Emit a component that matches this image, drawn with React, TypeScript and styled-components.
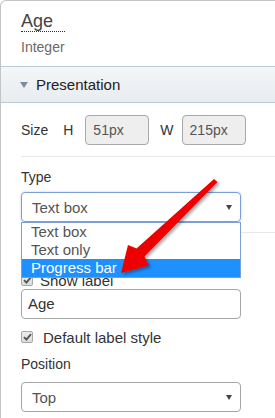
import React from "react";
import styled, { createGlobalStyle } from "styled-components";

const Global = createGlobalStyle`
  html, body { margin: 0; padding: 0; background: #fff; }
  body { font-family: "Liberation Sans", Arial, sans-serif; color: #333; overflow: hidden; }
  * { box-sizing: border-box; }
`;

const Panel = styled.div`
  position: relative;
  width: 275px;
  height: 418px;
  border-top: 1px solid #c4c4c4;
  border-left: 1px solid #c4c4c4;
  border-top-left-radius: 6px;
  overflow: hidden;
`;

const Header = styled.div`
  height: 65px;
  padding: 10px 20px 0;
`;

const Title = styled.div`
  display: inline-block;
  font-size: 18px;
  line-height: 20px;
  color: #444;
  padding-right: 12px;
  border-bottom: 1px dotted #333;
`;

const Subtitle = styled.div`
  margin-top: 7px;
  font-size: 14px;
  line-height: 16px;
  color: #6a6a6a;
`;

const SectionHeader = styled.div`
  height: 37px;
  display: flex;
  align-items: center;
  padding-left: 19px;
  gap: 8px;
  border-top: 1px solid #b6ccd8;
  border-bottom: 1px solid #b6ccd8;
  background: linear-gradient(#f4f6f8, #e8ecf0);
  font-size: 15px;
  color: #222;
`;

const Caret = styled.span`
  width: 0;
  height: 0;
  border-left: 4.5px solid transparent;
  border-right: 4.5px solid transparent;
  border-top: 6px solid #7b8fa0;
  margin-top: 1px;
`;

const Body = styled.div`
  padding-left: 20px;
`;

const SizeRow = styled.div`
  margin-top: 12px;
  display: flex;
  align-items: center;
  height: 30px;
  font-size: 14px;
`;

const SizeLabel = styled.span<{ $gap: number; $lead?: number }>`
  margin-left: ${(p) => p.$lead ?? 0}px;
  margin-right: ${(p) => p.$gap}px;
`;

const ReadOnlyBox = styled.div`
  width: 64px;
  height: 30px;
  border: 1px solid #a9a9a9;
  border-radius: 4px;
  background: #eeeeee;
  color: #555;
  font-size: 14px;
  line-height: 28px;
  padding-left: 7px;
`;

const Divider = styled.div<{ $top: number }>`
  margin-top: ${(p) => p.$top}px;
  height: 1px;
  background: #e8e8e8;
`;

const FieldLabel = styled.div<{ $top: number }>`
  margin-top: ${(p) => p.$top}px;
  font-size: 14px;
  line-height: 16px;
  color: #333;
`;

const SelectWrap = styled.div<{ $top: number }>`
  position: relative;
  margin-top: ${(p) => p.$top}px;
  width: 220px;
`;

const SelectBox = styled.div<{ $focused?: boolean }>`
  height: 30px;
  border: 1px solid ${(p) => (p.$focused ? "#7a9fd6" : "#a6a6a6")};
  border-radius: 4px;
  box-shadow: ${(p) => (p.$focused ? "0 0 2px rgba(100,140,210,0.5)" : "none")};
  display: flex;
  align-items: center;
  justify-content: space-between;
  padding: 0 8px 0 10px;
  font-size: 15px;
  color: #555;
`;

const SelectArrow = styled.span`
  width: 0;
  height: 0;
  border-left: 3px solid transparent;
  border-right: 3px solid transparent;
  border-top: 5px solid #444;
`;

const DropList = styled.ul`
  position: absolute;
  top: 100%;
  left: 0;
  width: 220px;
  margin: 0;
  padding: 0;
  list-style: none;
  background: #fff;
  border: 1px solid #7a9fd6;
  z-index: 2;
`;

const DropItem = styled.li<{ $active?: boolean }>`
  height: 18px;
  line-height: 18px;
  padding-left: 9px;
  font-size: 15px;
  color: ${(p) => (p.$active ? "#fff" : "#555")};
  background: ${(p) => (p.$active ? "#1e90ff" : "transparent")};
`;

const CheckRow = styled.label<{ $top: number; $gap: number }>`
  margin-top: ${(p) => p.$top}px;
  display: flex;
  align-items: center;
  gap: ${(p) => p.$gap}px;
  height: 16px;
  font-size: 15px;
  color: #333;
`;

const CheckBox = styled.span`
  width: 12px;
  height: 12px;
  border: 1px solid #a8a8a8;
  border-radius: 2px;
  background: linear-gradient(#ececec, #dcdcdc);
  display: flex;
  align-items: center;
  justify-content: center;
`;

const TextField = styled.div<{ $top: number }>`
  margin-top: ${(p) => p.$top}px;
  width: 220px;
  height: 30px;
  border: 1px solid #a6a6a6;
  border-radius: 4px;
  font-size: 15px;
  line-height: 28px;
  padding-left: 6px;
  color: #333;
`;

const ArrowOverlay = styled.svg`
  position: absolute;
  left: 0;
  top: 0;
  pointer-events: none;
  z-index: 3;
`;

const Check = () => (
  <CheckBox>
    <svg width="9" height="8" viewBox="0 0 9 8">
      <path d="M1 4.2 L3.4 6.6 L8 1.2" stroke="#555" strokeWidth="1.8" fill="none" />
    </svg>
  </CheckBox>
);

export default function App() {
  return (
    <>
      <Global />
      <Panel>
        <Header>
          <Title>Age</Title>
          <Subtitle>Integer</Subtitle>
        </Header>
        <SectionHeader>
          <Caret />
          <span>Presentation</span>
        </SectionHeader>
        <Body>
          <SizeRow>
            <SizeLabel $gap={15}>Size</SizeLabel>
            <SizeLabel $gap={12}>H</SizeLabel>
            <ReadOnlyBox>51px</ReadOnlyBox>
            <SizeLabel $gap={8} $lead={11}>W</SizeLabel>
            <ReadOnlyBox>215px</ReadOnlyBox>
          </SizeRow>
          <Divider $top={11} />
          <FieldLabel $top={12}>Type</FieldLabel>
          <SelectWrap $top={7}>
            <SelectBox $focused>
              <span>Text box</span>
              <SelectArrow />
            </SelectBox>
            <DropList>
              <DropItem>Text box</DropItem>
              <DropItem>Text only</DropItem>
              <DropItem $active>Progress bar</DropItem>
            </DropList>
          </SelectWrap>
          <Divider $top={10} />
          <CheckRow $top={39} $gap={7}>
            <Check />
            <span>Show label</span>
          </CheckRow>
          <TextField $top={1}>Age</TextField>
          <CheckRow $top={10} $gap={10}>
            <Check />
            <span>Default label style</span>
          </CheckRow>
          <FieldLabel $top={11}>Position</FieldLabel>
          <SelectWrap $top={10}>
            <SelectBox>
              <span>Top</span>
              <SelectArrow />
            </SelectBox>
          </SelectWrap>
        </Body>
        <ArrowOverlay width="275" height="418" viewBox="0 0 275 418">
          <defs>
            <filter id="sh" x="-20%" y="-20%" width="140%" height="140%">
              <feDropShadow dx="2" dy="2" stdDeviation="1.5" floodColor="#000" floodOpacity="0.35" />
            </filter>
          </defs>
          <polygon
            points="213,178 216.5,181 143.5,255.5 148,264.5 120,272 127,244 135.5,247.5"
            fill="#ee0000"
            filter="url(#sh)"
          />
        </ArrowOverlay>
      </Panel>
    </>
  );
}
